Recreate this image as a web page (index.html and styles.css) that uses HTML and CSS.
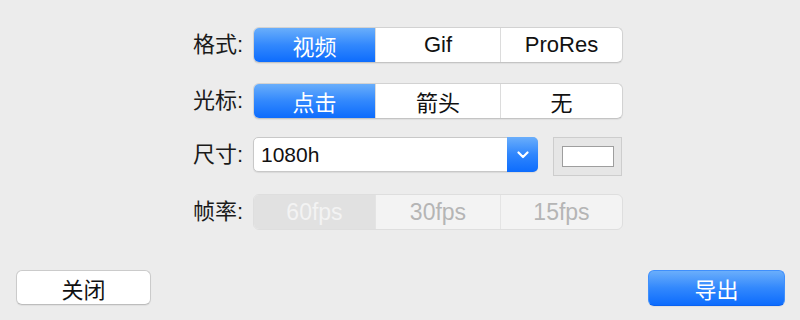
FILE: index.html
```html
<!DOCTYPE html>
<html lang="zh-CN">
<head>
    <meta charset="UTF-8">
    <meta name="viewport" content="width=device-width, initial-scale=1.0">
    <title>导出设置</title>
    <link rel="stylesheet" href="styles.css">
</head>
<body>
    <div class="window">
        <div class="form">
            <div class="row">
                <span class="label">格式:</span>
                <div class="segmented">
                    <div class="segment selected">视频</div>
                    <div class="segment middle">Gif</div>
                    <div class="segment">ProRes</div>
                </div>
            </div>

            <div class="row">
                <span class="label">光标:</span>
                <div class="segmented">
                    <div class="segment selected">点击</div>
                    <div class="segment middle">箭头</div>
                    <div class="segment">无</div>
                </div>
            </div>

            <div class="row row-size">
                <span class="label">尺寸:</span>
                <div class="select">
                    <span class="select-value">1080h</span>
                    <span class="select-arrow">
                        <svg width="12" height="8" viewBox="0 0 12 8">
                            <path d="M1.5 1.5 L6 6 L10.5 1.5" fill="none" stroke="#fff" stroke-width="2.2" stroke-linecap="round" stroke-linejoin="round"/>
                        </svg>
                    </span>
                </div>
                <div class="color-well">
                    <div class="color-swatch"></div>
                </div>
            </div>

            <div class="row">
                <span class="label">帧率:</span>
                <div class="segmented disabled">
                    <div class="segment selected">60fps</div>
                    <div class="segment middle">30fps</div>
                    <div class="segment">15fps</div>
                </div>
            </div>
        </div>

        <div class="footer">
            <button class="btn">关闭</button>
            <button class="btn btn-primary">导出</button>
        </div>
    </div>
</body>
</html>
```

FILE: styles.css
```css
* {
    margin: 0;
    padding: 0;
    box-sizing: border-box;
}

body {
    font-family: 'Liberation Sans', 'Noto Sans CJK SC', sans-serif;
    background: #ececec;
    color: #111;
    width: 800px;
    height: 320px;
    overflow: hidden;
}

.window {
    height: 320px;
    display: flex;
    flex-direction: column;
}

.form {
    display: flex;
    flex-direction: column;
    gap: 18px;
    padding: 27px 0 0 191px;
}

.row {
    display: flex;
    align-items: flex-start;
    gap: 10px;
}

.row:first-child {
    margin-bottom: 2px;
}

.label {
    width: 52px;
    height: 36px;
    line-height: 36px;
    font-size: 22px;
    text-align: right;
    color: #1a1a1a;
}

.segmented {
    display: flex;
    width: 370px;
    height: 36px;
    background: #fff;
    border: 1px solid #d2d2d2;
    border-bottom-color: #c4c4c4;
    border-radius: 6px;
    overflow: hidden;
    box-shadow: 0 1px 1px rgba(0, 0, 0, 0.06);
}

.segment {
    flex: 1;
    display: flex;
    justify-content: center;
    align-items: center;
    font-size: 22px;
    color: #111;
}

.segment.middle {
    flex: 0 0 126px;
    border-left: 1px solid #dcdcdc;
    border-right: 1px solid #dcdcdc;
}

.segment.selected {
    background: linear-gradient(180deg, #69aefb 0%, #3288fd 50%, #0d6cfd 100%);
    color: #fff;
}

.segmented.disabled {
    background: #f3f3f3;
    border-color: #dedede;
    box-shadow: none;
}

.segmented.disabled .segment {
    color: #b5b5b5;
    font-size: 23px;
}

.segmented.disabled .segment.middle {
    border-color: #e4e4e4;
}

.segmented.disabled .segment.selected {
    background: #e1e1e1;
    color: #f3f3f3;
}

.row-size {
    gap: 0;
}

.row-size .label {
    margin-right: 10px;
}

.select {
    display: flex;
    width: 285px;
    height: 35px;
    background: #fff;
    border: 1px solid #c8c8c8;
    border-radius: 5px;
    box-shadow: 0 1px 1px rgba(0, 0, 0, 0.08);
}

.select-value {
    flex: 1;
    line-height: 33px;
    padding-left: 7px;
    font-size: 21px;
    color: #111;
}

.select-arrow {
    width: 31px;
    margin: -1px -1px -1px 0;
    display: flex;
    justify-content: center;
    align-items: center;
    background: linear-gradient(180deg, #6aaefb 0%, #2f86fd 50%, #0d6cfd 100%);
    border-radius: 0 5px 5px 0;
}

.color-well {
    width: 69px;
    height: 39px;
    margin-left: 15px;
    background: #e6e6e6;
    border: 1px solid #cdcdcd;
    display: flex;
    justify-content: center;
    align-items: center;
}

.color-swatch {
    width: 52px;
    height: 21px;
    background: #fff;
    border: 1px solid #9e9e9e;
}

.footer {
    display: flex;
    justify-content: space-between;
    padding: 0 15px 0 16px;
    margin-top: 40px;
}

.btn {
    width: 135px;
    height: 35px;
    font-family: inherit;
    font-size: 22px;
    color: #111;
    background: #fff;
    border: 1px solid #cbcbcb;
    border-bottom-color: #bdbdbd;
    border-radius: 6px;
    box-shadow: 0 1px 1px rgba(0, 0, 0, 0.06);
}

.btn-primary {
    width: 137px;
    height: 36px;
    color: #fff;
    border: 1px solid #3f8ffc;
    border-bottom-color: #0a62f0;
    background: linear-gradient(180deg, #6aaefb 0%, #3288fd 50%, #0d6cfd 100%);
}
```
